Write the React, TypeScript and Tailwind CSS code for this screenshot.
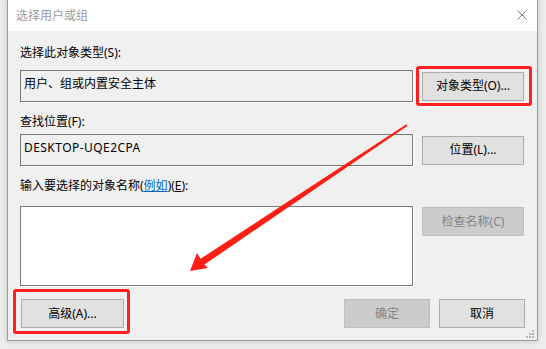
import type { ReactNode } from 'react';

const FONT = "'Noto Sans','Noto Sans CJK SC',sans-serif";

function Field({ children, white, className = '' }: { children?: ReactNode; white?: boolean; className?: string }) {
  return (
    <div
      className={`flex w-[393px] items-start border border-[#7a7a7a] px-[3px] pt-[5px] text-[12px] leading-4 text-black shadow-[1px_1px_0_#ffffff] ${
        white ? 'bg-white' : 'bg-[#f0f0f0]'
      } ${className}`}
    >
      {children}
    </div>
  );
}

function Btn({ children, disabled, className = '' }: { children: ReactNode; disabled?: boolean; className?: string }) {
  return (
    <div
      className={`flex h-[29px] items-center justify-center border text-[12px] leading-4 ${
        disabled ? 'border-[#bfbfbf] bg-[#cccccc] text-[#838383]' : 'border-[#adadad] bg-[#e1e1e1] text-black'
      } ${className}`}
    >
      {children}
    </div>
  );
}

export default function App() {
  return (
    <div className="relative h-[349px] w-[546px] overflow-hidden bg-[#ededed]" style={{ fontFamily: FONT }}>
      <div className="ml-[7px] flex h-[341px] w-[531px] flex-col border-x border-b border-[#9c9c9c] bg-[#f0f0f0] shadow-[0_0_6px_rgba(0,0,0,0.18)]">
        <div className="flex h-[31px] items-center justify-between bg-white pl-[8px] pr-[10px]">
          <span className="text-[12px] leading-4 text-[#9a9a9a]">选择用户或组</span>
          <svg width="10" height="10" viewBox="0 0 10 10" className="mb-[2px]">
            <path d="M0.5 0.5 L9.5 9.5 M9.5 0.5 L0.5 9.5" stroke="#7a7a7a" strokeWidth="1" />
          </svg>
        </div>

        <div className="flex flex-1 flex-col pl-[12px] pr-[13px] pt-[14px]">
          <div className="text-[12px] leading-4 text-black">选择此对象类型(S):</div>
          <div className="mt-[9px] flex items-center gap-[9px]">
            <Field className="h-[32px]">用户、组或内置安全主体</Field>
            <Btn className="w-[102px]">对象类型(O)...</Btn>
          </div>

          <div className="mt-[12px] text-[12px] leading-4 text-black">查找位置(F):</div>
          <div className="mt-[4px] flex items-center gap-[9px]">
            <Field className="h-[32px]">
              <span className="tracking-[0.45px]">DESKTOP-UQE2CPA</span>
            </Field>
            <Btn className="w-[102px]">位置(L)...</Btn>
          </div>

          <div className="mt-[12px] text-[12px] leading-4 text-black">
            输入要选择的对象名称(<span className="text-[#0066cc] underline">例如</span>)(<span className="underline">E</span>):
          </div>
          <div className="mt-[12px] flex items-start gap-[9px]">
            <Field white className="h-[80px]" />
            <Btn disabled className="mt-[1px] w-[102px]">
              检查名称(C)
            </Btn>
          </div>

          <div className="mt-[13px] flex items-center">
            <Btn className="ml-[1px] w-[103px]">高级(A)...</Btn>
            <div className="flex-1" />
            <Btn disabled className="w-[86px]">
              确定
            </Btn>
            <Btn className="ml-[9px] mr-[-1px] w-[86px]">取消</Btn>
          </div>
        </div>
      </div>

      {/* resize grip */}
      <svg width="9" height="9" viewBox="0 0 9 9" className="absolute left-[526px] top-[330px]">
        <rect x="6" y="0" width="2" height="2" fill="#b5b5b5" />
        <rect x="3" y="3" width="2" height="2" fill="#b5b5b5" />
        <rect x="6" y="3" width="2" height="2" fill="#b5b5b5" />
        <rect x="0" y="6" width="2" height="2" fill="#b5b5b5" />
        <rect x="3" y="6" width="2" height="2" fill="#b5b5b5" />
        <rect x="6" y="6" width="2" height="2" fill="#b5b5b5" />
      </svg>

      {/* annotation overlays */}
      <div className="absolute left-[416px] top-[66px] h-[40px] w-[116px] rounded-[3px] border-[3px] border-[#ff1f1f]" />
      <div className="absolute left-[13px] top-[289px] h-[45px] w-[117px] rounded-[3px] border-[3px] border-[#ff1f1f]" />
      <svg width="546" height="349" viewBox="0 0 546 349" className="pointer-events-none absolute left-0 top-0">
        <polygon
          points="406.4,124.2 200.6,258.8 197,253 190,271 208,268 204.4,264.6 407.6,125.8"
          fill="#ff1f14"
        />
      </svg>
    </div>
  );
}
